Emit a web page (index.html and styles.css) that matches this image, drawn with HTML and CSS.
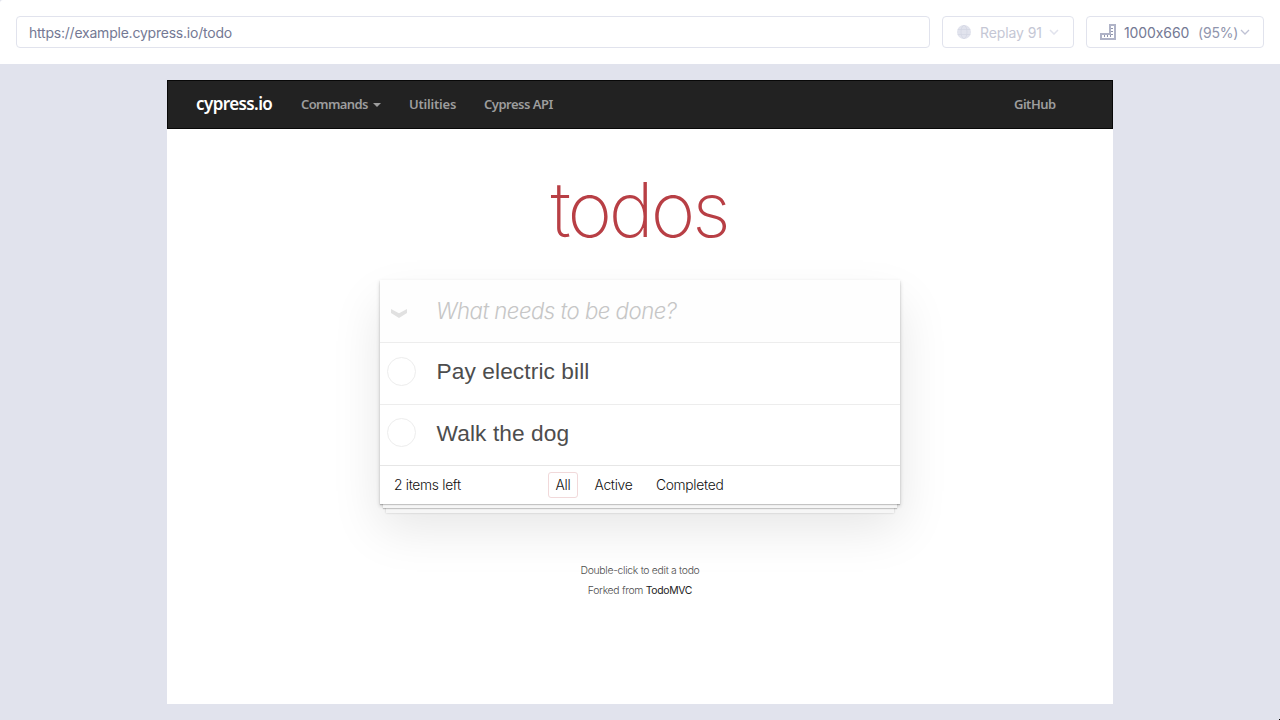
FILE: index.html
```html
<!DOCTYPE html>
<html lang="en">
<head>
<meta charset="utf-8">
<title>todos</title>
<link rel="stylesheet" href="styles.css">
</head>
<body>
<header class="toolbar">
  <div class="box url"><span class="url-text">https://example.cypress.io/todo</span></div>
  <div class="box browser">
    <svg class="globe" width="14" height="14" viewBox="0 0 14 14"><circle cx="7" cy="7" r="7" fill="#e1e3ed"/><g fill="none" stroke="#d3d5e2" stroke-width=".7"><ellipse cx="7" cy="7" rx="3" ry="6.6"/><path d="M.8 4.5h12.4M.8 9.5h12.4"/></g></svg>
    <span class="replay">Replay 91</span>
    <svg class="chev" width="10" height="6" viewBox="0 0 10 6"><path d="M1 1l4 4 4-4" fill="none" stroke="#e1e3ed" stroke-width="1.5"/></svg>
  </div>
  <div class="box size">
    <svg class="ruler" width="16" height="16" viewBox="0 0 16 16"><path d="M1 10h9V1h5v14H1z" fill="#fff" stroke="#afb3c7" stroke-width="2"/><path d="M4.5 11v2M7.500 11v2M10.500 11v2M11 10.500h2M11 7.500h2M11 4.500h2" stroke="#9095ad" fill="none"/></svg>
    <span class="dims">1000x660</span><span class="pct">(95%)</span>
    <svg class="chev2" width="10" height="6" viewBox="0 0 10 6"><path d="M1 1l4 4 4-4" fill="none" stroke="#bfc2d4" stroke-width="1.3"/></svg>
  </div>
</header>
<main class="stage">
  <div class="app">
    <nav class="nav">
      <span class="brand">cypress.io</span>
      <span class="link commands">Commands</span><i class="caret"></i>
      <span class="link utilities">Utilities</span>
      <span class="link api">Cypress API</span>
      <span class="link github">GitHub</span>
    </nav>
    <h1 class="title">todos</h1>
    <section class="card">
      <div class="row new">
        <svg class="toggle" width="16" height="9" viewBox="0 0 16 9"><path d="M0 0L8 4.300 16 0V4L8 9 0 4z" fill="#e1e1e1"/></svg>
        <span class="placeholder">What needs to be done?</span>
      </div>
      <div class="row"><i class="check"></i><span class="task pay">Pay electric bill</span></div>
      <div class="row second"><i class="check"></i><span class="task walk">Walk the dog</span></div>
      <footer class="foot">
        <span class="left">2 items left</span>
        <span class="filter all">All</span>
        <span class="filter active">Active</span>
        <span class="filter completed">Completed</span>
      </footer>
    </section>
    <div class="info"><p class="edit">Double-click to edit a todo</p><p class="forked">Forked from <b>TodoMVC</b></p></div>
  </div>
</main>
<i class="corner"></i>
</body>
</html>
```
FILE: styles.css
```css
* { box-sizing: border-box; }
body { margin: 0; width: 1280px; height: 720px; overflow: hidden; background: #e1e3ed; font-family: "Liberation Sans", Arial, sans-serif; }
span, b { white-space: nowrap; }
svg, .caret, .check { flex: none; display: block; }
.toolbar { height: 64px; padding: 16px; display: flex; gap: 12px; background: #fff; font: 14px/32px Inter, sans-serif; font-feature-settings: "calt" 0; border-top-left-radius: 3px; }
.toolbar span { padding-top: 2px; }
.box { height: 32px; border: 1px solid #e1e3ed; border-radius: 4px; display: flex; align-items: center; color: #747994; }
.url { width: 914px; padding-left: 12px; letter-spacing: -.22px; }
.browser { width: 132px; padding-left: 14px; color: #c5c7d5; }
.replay { margin-left: 9px; width: 63px; letter-spacing: -.1px; }
.chev { margin-left: 6px; }
.size { width: 178px; padding-left: 13px; }
.dims { margin-left: 8px; width: 66px; letter-spacing: -.1px; }
.pct { margin-left: 8px; width: 40px; color: #9095ad; letter-spacing: -.2px; }
.chev2 { margin-left: 2px; }
.stage { height: 656px; padding: 16px 167px; }
.app { width: 946px; height: 624px; background: #fff; }
.nav { height: 49px; background: #222; border: 1px solid #080808; display: flex; align-items: center; padding: 0 56px 2px 28px; font-family: "Noto Sans", sans-serif; }
.brand { width: 77px; color: #fff; font-size: 17px; font-weight: 600; letter-spacing: -.6px; }
.link { color: #9d9d9d; font-size: 13px; font-weight: 600; letter-spacing: -.62px; }
.commands { margin-left: 28px; width: 67px; }
.caret { width: 8px; height: 4px; margin: 3px 0 0 5px; border: 4px solid transparent; border-bottom: 0; border-top-color: #9d9d9d; }
.utilities { margin-left: 28px; width: 47px; letter-spacing: -.2px; }
.api { margin-left: 28px; letter-spacing: -.5px; }
.github { margin-left: auto; width: 42px; letter-spacing: -.5px; }
.title { margin: 0; height: 151px; padding-top: 27px; text-align: center; color: #b83f45; font: 200 76px/106px Inter, sans-serif; letter-spacing: -3.1px; text-indent: -2px; }
.card { width: 520px; height: 224px; margin: 0 auto; background: #fff; box-shadow: 0 1px 1px rgba(0,0,0,.2), 0 7px 0 -3px #f6f6f6, 0 8px 1px -3px rgba(0,0,0,.2), 0 15px 0 -6px #f6f6f6, 0 15px 2px -6px rgba(0,0,0,.2), 0 2px 4px rgba(0,0,0,.2), 0 24px 47px rgba(0,0,0,.1); }
.row { height: 62px; display: flex; align-items: center; border-bottom: 1px solid #ededed; padding: 0 0 5px 7px; color: #4d4d4d; font-size: 22.700px; letter-spacing: .1px; }
.new { height: 63px; background: #fefefe; padding: 0 0 0 11px; }
.toggle { margin-top: 5px; }
.placeholder { margin: -1px 0 0 29px; font: italic 300 22.200px Inter, sans-serif; letter-spacing: -.5px; color: #c6c6c6; }
.check { width: 29px; height: 29px; border: 1px solid #ededed; border-radius: 50%; }
.task { margin-left: 20.500px; }
.second { height: 61px; border-bottom-color: #e6e6e6; padding-bottom: 3px; }
.second .check { margin-top: -2px; }
.foot { height: 38px; display: flex; align-items: center; padding-left: 14px; font: 300 13.800px Inter, sans-serif; letter-spacing: -.3px; color: #111; }
.left { width: 154px; }
.all { width: 30px; height: 26px; border: 1px solid #f1d9da; border-radius: 3px; text-align: center; line-height: 24px; }
.active { margin-left: 16.500px; width: 38px; }
.completed { margin-left: 23.500px; }
.info { padding-top: 57px; text-align: center; color: #4d4d4d; font: 300 10.400px/20px Inter, sans-serif; letter-spacing: -.3px; }
.info p { margin: 0; }
.info b { font-weight: 400; color: #222; }
.corner { position: absolute; right: 0; bottom: 0; width: 1px; height: 1px; background: #000; }
```
